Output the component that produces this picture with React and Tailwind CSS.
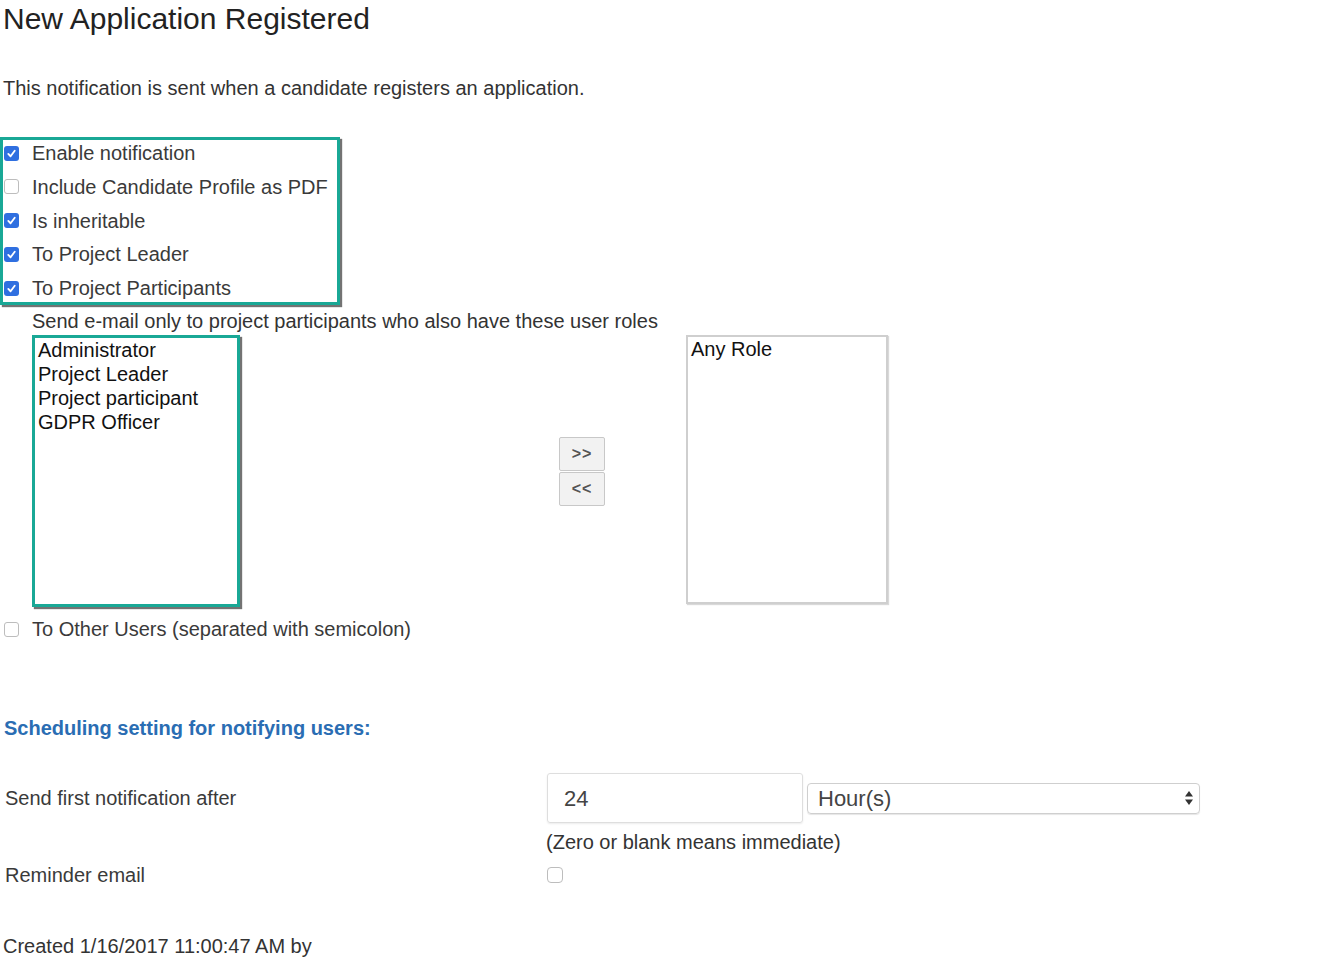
import React from "react";

const font = { fontFamily: '"Liberation Sans", Arial, sans-serif' };

function Box({ checked }) {
  return checked ? (
    <span className="inline-flex h-[15px] w-[15px] shrink-0 items-center justify-center rounded-[3px] bg-[#2f6fe0]">
      <svg width="11" height="11" viewBox="0 0 12 12">
        <path d="M2.5 6.5 L5 9 L9.5 3" fill="none" stroke="white" strokeWidth="2" strokeLinecap="round" strokeLinejoin="round" />
      </svg>
    </span>
  ) : (
    <span className="inline-block h-[15px] w-[15px] shrink-0 rounded-[3px] border border-[#bdbdbd] bg-white" />
  );
}

function CheckRow({ checked, label }) {
  return (
    <div className="flex h-[26px] items-center">
      <span className="ml-[1px] flex items-center"><Box checked={checked} /></span>
      <span className="ml-[13px] text-[20px] leading-[24px] text-[#3a3a3a]">{label}</span>
    </div>
  );
}

export default function App() {
  return (
    <div className="min-h-[962px] w-[1322px] bg-white text-[#333]" style={font}>
      <h1 className="pl-[3px] pt-[2px] text-[30px] leading-[34px] text-[#222]">New Application Registered</h1>
      <p className="mt-[40px] pl-[3px] text-[20px] leading-[24px] text-[#333]">
        This notification is sent when a candidate registers an application.
      </p>

      <div className="mt-[37px] flex w-[340px] flex-col gap-[7.75px] border-[3px] border-[#19a896] pb-[1px] shadow-[2px_2px_1px_rgba(0,0,0,0.55)]">
        <CheckRow checked label="Enable notification" />
        <CheckRow checked={false} label="Include Candidate Profile as PDF" />
        <CheckRow checked label="Is inheritable" />
        <CheckRow checked label="To Project Leader" />
        <CheckRow checked label="To Project Participants" />
      </div>

      <div className="mt-[4px] pl-[32px] text-[20px] leading-[24px] text-[#333]">
        Send e-mail only to project participants who also have these user roles
      </div>

      <div className="mt-[2px] flex items-start">
        <div className="ml-[32px] h-[272px] w-[208px] border-[3px] border-[#19a896] pl-[3px] text-[20px] leading-[24px] text-[#111] shadow-[2px_2px_1px_rgba(0,0,0,0.55)]">
          <div>Administrator</div>
          <div>Project Leader</div>
          <div>Project participant</div>
          <div>GDPR Officer</div>
        </div>
        <div className="ml-[319px] mt-[102px] flex w-[46px] flex-col gap-[1px]">
          <button className="flex h-[34px] items-center justify-center rounded-[2px] border border-[#c8c8c8] bg-[#f2f2f2] text-[16px] font-bold tracking-[1px] text-[#555]">&gt;&gt;</button>
          <button className="flex h-[34px] items-center justify-center rounded-[2px] border border-[#c8c8c8] bg-[#f2f2f2] text-[16px] font-bold tracking-[1px] text-[#555]">&lt;&lt;</button>
        </div>
        <div className="ml-[81px] h-[269px] w-[202px] border-2 border-[#cfcfcf] pl-[3px] text-[20px] leading-[24px] text-[#111] shadow-[1px_1px_1px_rgba(0,0,0,0.15)]">
          Any Role
        </div>
      </div>

      <div className="mt-[10px] flex h-[24px] items-center pl-[4px]">
        <Box checked={false} />
        <span className="ml-[13px] text-[20px] leading-[24px] text-[#3a3a3a]">To Other Users (separated with semicolon)</span>
      </div>

      <div className="mt-[75px] pl-[4px] text-[20px] font-bold leading-[24px] text-[#2a6db3]">
        Scheduling setting for notifying users:
      </div>

      <div className="mt-[33px] flex items-center">
        <div className="w-[547px] pl-[5px] text-[20px] leading-[24px] text-[#3a3a3a]">Send first notification after</div>
        <div className="flex h-[50px] w-[256px] items-center rounded-[3px] border border-[#dedede] pl-[16px] text-[22px] text-[#444] shadow-[0_1px_2px_rgba(0,0,0,0.08)]">24</div>
        <div className="ml-[4px] flex h-[31px] w-[393px] items-center justify-between rounded-[4px] border border-[#cfcfcf] pl-[10px] pr-[5px] text-[22px] text-[#444] shadow-[0_1px_1px_rgba(0,0,0,0.1)]">
          <span>Hour(s)</span>
          <svg width="10" height="18" viewBox="0 0 10 18">
            <path d="M5 2 L9 7.5 L1 7.5 Z" fill="#333" />
            <path d="M5 16 L9 10.5 L1 10.5 Z" fill="#333" />
          </svg>
        </div>
      </div>

      <div className="mt-[7px] pl-[546px] text-[20px] leading-[24px] text-[#333]">(Zero or blank means immediate)</div>

      <div className="mt-[9px] flex h-[24px] items-center">
        <div className="w-[547px] pl-[5px] text-[20px] leading-[24px] text-[#3a3a3a]">Reminder email</div>
        <span className="inline-block h-[16px] w-[16px] rounded-[4px] border border-[#bdbdbd] bg-white" />
      </div>

      <div className="mt-[47px] pl-[3px] text-[20px] leading-[24px] text-[#333]">Created 1/16/2017 11:00:47 AM by</div>
    </div>
  );
}
